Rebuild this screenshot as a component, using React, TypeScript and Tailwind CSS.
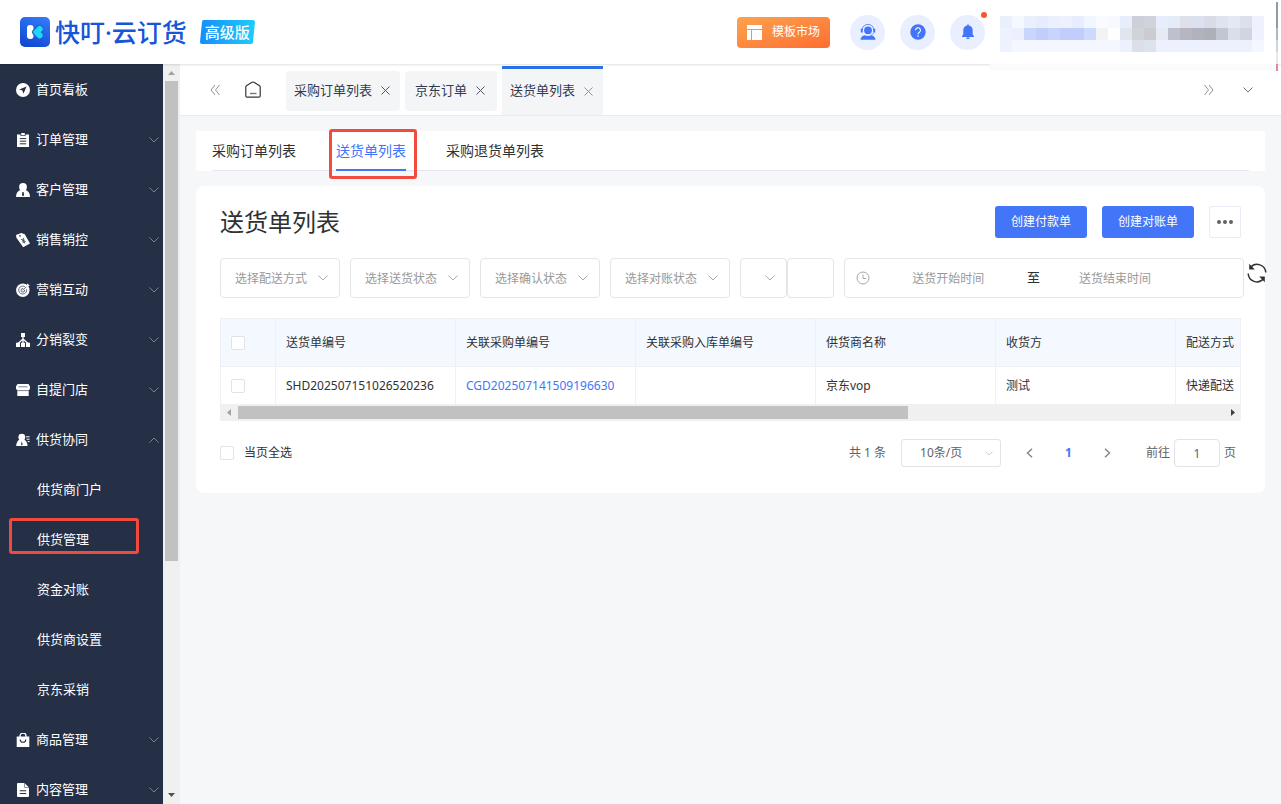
import { useState } from "react";
import type { ReactNode } from "react";

interface MenuItem {
  label: string;
  icon: ReactNode;
  expandable?: boolean;
  children?: string[];
}

function MenuIcon({ children }: { children: ReactNode }) {
  return (
    <svg viewBox="0 0 14 14" className="size-[14px] shrink-0" fill="#fff" aria-hidden="true">
      {children}
    </svg>
  );
}

const ink = "#252f46";

const menu: MenuItem[] = [
  {
    label: "首页看板",
    icon: (
      <MenuIcon>
        <circle cx="7" cy="7" r="7" />
        <path d="M10.6 3.6 3.2 6.6l3.2 1 1 3.2z" fill={ink} />
      </MenuIcon>
    ),
  },
  {
    label: "订单管理",
    expandable: true,
    icon: (
      <MenuIcon>
        <path d="M1 1.5h3.5V3h5V1.5H13V14H1z" />
        <path d="M5.2 0h3.6v2.3H5.2z" />
        <path d="M3.8 5.6h6.4M3.8 8.2h6.4M3.8 10.8h6.4" stroke={ink} strokeWidth="1" />
      </MenuIcon>
    ),
  },
  {
    label: "客户管理",
    expandable: true,
    icon: (
      <MenuIcon>
        <circle cx="7" cy="3.9" r="3.9" />
        <path d="M4.5 6.8h5C12.500 8 14 10.500 14 14H0C0 10.500 1.500 8 4.500 6.800z" />
        <path d="M6.400 9h1.200l.5 3.200L7 13.300l-1.100-1.100z" fill={ink} />
      </MenuIcon>
    ),
  },
  {
    label: "销售销控",
    expandable: true,
    icon: (
      <MenuIcon>
        <path d="M0 2 5.200 0l3.600 1.200L14 10.600 7.200 14.200.4 4.800z" />
        <circle cx="4" cy="2.900" r=".8" fill={ink} />
        <path d="m4.900 6.200 2.300 1 .5-2.300M7.200 7.200l1.600 3.200M5.900 8.400l3-1.400M6.700 9.800l3-1.400" stroke={ink} strokeWidth=".8" fill="none" />
      </MenuIcon>
    ),
  },
  {
    label: "营销互动",
    expandable: true,
    icon: (
      <MenuIcon>
        <circle cx="6.800" cy="7.200" r="6.700" />
        <path d="M9 3.800A4 4 0 1 0 10.600 6.200" fill="none" stroke={ink} strokeWidth=".7" />
        <path d="M7.300 5.600a1.800 1.800 0 1 0 1.300 1.400M6.800 7.300 13 1.300" fill="none" stroke={ink} strokeWidth=".7" />
        <path d="m10 2.200 2-2 .4 1.500 1.500.4-2 2-1.500-.2z" />
      </MenuIcon>
    ),
  },
  {
    label: "分销裂变",
    expandable: true,
    icon: (
      <MenuIcon>
        <path d="M5 0h4v4H5zM0 9.800h4V14H0zM5 9.800h4V14H5zM10 9.800h4V14h-4z" />
        <path d="M7 3.500V10M7 6 2 10.500M7 6l5 4.500" stroke="#fff" strokeWidth="1.300" />
      </MenuIcon>
    ),
  },
  {
    label: "自提门店",
    expandable: true,
    icon: (
      <MenuIcon>
        <path d="M1.500 1h11L14 3.500v2A1.800 1.800 0 0 1 12.700 7v6H1.300V7A1.800 1.800 0 0 1 0 5.500v-2z" />
        <path d="M2.500 3.800h9M1.300 7.600h11.400" stroke={ink} strokeWidth=".6" />
      </MenuIcon>
    ),
  },
  {
    label: "供货协同",
    expandable: true,
    icon: (
      <MenuIcon>
        <circle cx="5.800" cy="4.200" r="3.400" />
        <path d="M3.600 6.400H8c2.300 1.200 3.600 3.600 3.600 6.600H.2c0-3 1.200-5.400 3.400-6.600z" />
        <path d="m5.800 8.300.8 3.200-.8 1-.8-1z" fill={ink} />
        <path d="M10 3.800h3.600M10.500 6.200h3.100M11.600 8.600h2" stroke="#fff" strokeWidth="1" />
      </MenuIcon>
    ),
    children: ["供货商门户", "供货管理", "资金对账", "供货商设置", "京东采销"],
  },
  {
    label: "商品管理",
    expandable: true,
    icon: (
      <MenuIcon>
        <path d="M.7 3.500h12.600V14H.7z" />
        <path d="M4 4.500V3a3 3 0 0 1 6 0v1.500" fill="none" stroke="#fff" strokeWidth="1.300" />
        <path d="M4.200 6.500a2.800 2.800 0 0 0 5.600 0" fill="none" stroke={ink} strokeWidth="1.100" />
      </MenuIcon>
    ),
  },
  {
    label: "内容管理",
    expandable: true,
    icon: (
      <MenuIcon>
        <path d="M1 1a1 1 0 0 1 1-1h6.500L13 4.500V13a1 1 0 0 1-1 1H2a1 1 0 0 1-1-1z" />
        <path d="M8.500 0v4.500H13" fill="none" stroke={ink} strokeWidth=".5" />
        <path d="M3.800 7.700h6.400M3.800 10.500h6.400" stroke={ink} strokeWidth="1.100" />
      </MenuIcon>
    ),
  },
];

const pageTabs = ["采购订单列表", "京东订单", "送货单列表"];
const listTabs = ["采购订单列表", "送货单列表", "采购退货单列表"];
const filters = ["选择配送方式", "选择送货状态", "选择确认状态", "选择对账状态"];
const columns = ["送货单编号", "关联采购单编号", "关联采购入库单编号", "供货商名称", "收货方", "配送方式"];

const orders = [
  {
    id: "SHD202507151026520236",
    purchaseId: "CGD202507141509196630",
    stockInId: "",
    supplier: "京东vop",
    receiver: "测试",
    delivery: "快递配送",
  },
];

// the account name is masked with a 22 x 3 mosaic
const mosaic = [
  "e8effd f4f8ff eaeffd e5ecfc eaf0fd ecf1fd e6edfd f2f6fe f9fbfe f6f9fe e7edfa cdd0d8 d0d2dc e7edfd e4ebf9 dee1eb dce1ef d9dce7 dfe3f0 e4e8f5 dce0ec eff2fe",
  "eef2fe eceffc c9d5fb c0cefb c9d4fc c1cdfb c1cdfb ccdafd f2f3f3 fefefe e1e5f0 d0d3d8 cccbd0 e6eaf5 bdc1ce b7b5c0 b0b3be adb0b8 c1c6d5 dadee8 d0d5e1 eff2fe",
  "ecf2fe f4f7ff f4f7ff f4f7ff f4f7ff f4f7ff f4f7ff f4f7ff f4f7ff f4f7ff ecf1fe dcdee8 dde3ee edf1fe edf1fe edf1fe edf1fe edf1fe edf1fe edf1fe edf1fe f4f7ff",
].map((row) => row.split(" "));

function Chevron({ className, up }: { className: string; up?: boolean }) {
  return (
    <svg viewBox="0 0 10 6" fill="none" stroke="currentColor" className={className} aria-hidden="true">
      <path d={up ? "M.5 5.500 5 1l4.500 4.500" : "M.5.5 5 5 9.500.5"} />
    </svg>
  );
}

function DoubleArrow({ right }: { right?: boolean }) {
  return (
    <svg viewBox="0 0 10 12" fill="none" stroke="#8f939b" className="h-3 w-[10px]" aria-hidden="true">
      <path d={right ? "M.5 1l4 5-4 5M5 1l4 5-4 5" : "M5 1 1 6l4 5M9.500 1l-4 5 4 5"} />
    </svg>
  );
}

function Logo() {
  return (
    <svg viewBox="0 0 30 30" className="size-[30px]" aria-hidden="true">
      <defs>
        <linearGradient id="logo-bg" x1="0.300" y1="1" x2="0.700" y2="0">
          <stop offset="0" stopColor="#1049d2" />
          <stop offset="1" stopColor="#3478f6" />
        </linearGradient>
      </defs>
      <rect width="30" height="30" rx="5" fill="url(#logo-bg)" />
      <rect x="7" y="8" width="6.500" height="14" rx="3" fill="#fff" />
      <path d="m19.500 12-3.300 3.200 3.300 3.200" stroke="#1d5bdf" strokeWidth="8" fill="none" strokeLinecap="round" strokeLinejoin="round" />
      <path d="m19.700 12-3.200 3.200 3.200 3.200" stroke="#1fd6f5" strokeWidth="6" fill="none" strokeLinecap="round" strokeLinejoin="round" />
    </svg>
  );
}

function Header() {
  return (
    <header className="relative z-20 flex h-16 shrink-0 items-center bg-white pl-5 pr-[17px] shadow-[0_1px_2px_rgba(0,0,0,0.12)]">
      <Logo />
      <div className="ml-[5px] flex items-center whitespace-nowrap text-[25px] leading-8 font-medium text-[#1755d9]">
        <span>快叮</span>
        <span>·</span>
        <span>云订货</span>
      </div>
      <div className="relative ml-[13px] flex h-6 w-[55px] items-center justify-center">
        <svg viewBox="0 0 55 24" className="absolute inset-0" aria-hidden="true">
          <defs>
            <linearGradient id="badge-bg">
              <stop offset="0" stopColor="#168dfb" />
              <stop offset="1" stopColor="#1fccfb" />
            </linearGradient>
          </defs>
          <path d="M4 0h49q2 0 2 2l-2 20q0 2-2 2H2q-2 0-2-2L2 2q0-2 2-2z" fill="url(#badge-bg)" />
        </svg>
        <span className="relative text-[15px] leading-6 font-medium text-white">高级版</span>
      </div>

      <div className="ml-auto flex items-center">
        <button
          type="button"
          className="flex h-[31px] w-[93px] items-center justify-between rounded bg-linear-to-br from-[#fda24e] to-[#fd6d31] px-[10px] text-xs text-white"
        >
          <svg viewBox="0 0 15 15" fill="#fff" className="size-[15px]" aria-hidden="true">
            <path d="M0 0h15v4H0zM0 5h4v10H0zM5 5h10v10H5z" />
          </svg>
          模板市场
        </button>
        <button
          type="button"
          aria-label="客服"
          className="ml-5 flex size-[35px] items-center justify-center rounded-full bg-[#e9effe]"
        >
          <svg viewBox="0 0 16 16" className="size-4" fill="#4375f8" aria-hidden="true">
            <circle cx="8" cy="6.300" r="3.900" />
            <path d="M2.100 6A5.900 5.600 0 0 1 13.900 6" fill="none" stroke="#4375f8" strokeWidth=".8" />
            <path d="M.8 4.800h2v3.700h-2zM13.200 4.800h2v3.700h-2z" />
            <path d="M14 8.500c-.6 1.600-1.600 2.200-3 2.400" fill="none" stroke="#4375f8" strokeWidth=".6" />
            <path d="M4.800 11.300c2 .8 4.400.8 6.400 0 2.500.5 4 1.900 4.300 4.400H.5c.3-2.500 1.800-3.900 4.300-4.400z" />
          </svg>
        </button>
        <button
          type="button"
          aria-label="帮助"
          className="ml-[15px] flex size-[35px] items-center justify-center rounded-full bg-[#e9effe]"
        >
          <svg viewBox="0 0 16 16" className="size-4" aria-hidden="true">
            <circle cx="8" cy="8" r="7.700" fill="#4375f8" />
            <path d="M5.500 6.300a2.500 2.500 0 1 1 3.700 2.200C8.300 9 8 9.300 8 10.200" fill="none" stroke="#fff" strokeWidth="1.100" />
            <circle cx="8" cy="12" r=".8" fill="#fff" />
          </svg>
        </button>
        <button
          type="button"
          aria-label="消息"
          className="relative ml-[15px] flex size-[35px] items-center justify-center rounded-full bg-[#e9effe]"
        >
          <svg viewBox="0 0 16 16" className="size-4" fill="#4375f8" aria-hidden="true">
            <path d="M7.200 1a.8.8 0 0 1 1.600 0v.6c2.400.4 3.900 2.300 3.900 4.700v4l1.300 2v.7H2v-.7l1.300-2v-4C3.300 3.900 4.800 2 7.200 1.600zM6.200 13.600h3.600c-.2 1-.9 1.700-1.800 1.700s-1.600-.7-1.800-1.700z" />
          </svg>
          <span className="absolute -right-[2px] -top-[3px] size-[6px] rounded-full bg-[#fb5430]" />
        </button>
        <div className="ml-[15px] mt-1 grid grid-cols-[repeat(22,12px)]" aria-hidden="true">
          {mosaic.flat().map((color, i) => (
            <span key={i} className="h-3" style={{ backgroundColor: `#${color}` }} />
          ))}
        </div>
      </div>
      <div className="absolute right-[5px] top-16 h-[7px] w-[286px] bg-[#fbfbfc]" />
      <div className="absolute right-[3px] top-[2px] flex w-[2px] flex-col" aria-hidden="true">
        <span className="h-[26px] bg-[#8f9ba8]" />
        <span className="h-3 bg-[#adb8c8]" />
        <span className="h-3 bg-[#d0d3db]" />
        <span className="h-3 bg-[#e8e8eb]" />
        <span className="h-[7px] bg-[#de8a9c]" />
      </div>
    </header>
  );
}

function Sidebar() {
  return (
    <aside className="flex w-[180px] shrink-0 bg-[#f5f7f9]">
      <nav className="w-[163px] overflow-hidden bg-[#252f46] pt-px text-[13px] text-white">
        <ul>
          {menu.map((item) => (
            <li key={item.label}>
              <a href="#" className="flex h-[50px] items-center gap-[6px] pl-4 pr-1">
                {item.icon}
                <span>{item.label}</span>
                {item.expandable && (
                  <Chevron up={!!item.children} className="ml-auto h-[6px] w-[10px] text-[#7d828c]" />
                )}
              </a>
              {item.children && (
                <ul>
                  {item.children.map((child) => (
                    <li key={child} className="relative">
                      <a href="#" className="flex h-[50px] items-center pl-[37px]">
                        {child}
                      </a>
                      {child === "供货管理" && (
                        <span className="pointer-events-none absolute left-[9px] top-[3px] h-9 w-[130px] rounded-[3px] border-3 border-[#f04b3e]" />
                      )}
                    </li>
                  ))}
                </ul>
              )}
            </li>
          ))}
        </ul>
      </nav>
      <div className="flex w-[17px] flex-col bg-[#f0f0f0] px-[2px]" aria-hidden="true">
        <svg viewBox="0 0 13 17" className="h-[17px] w-[13px] shrink-0" fill="#a3a3a3">
          <path d="M3 11h7L6.500 7z" />
        </svg>
        <div className="flex-1">
          <div className="h-[68%] bg-[#c1c1c1]" />
        </div>
        <svg viewBox="0 0 13 17" className="h-[17px] w-[13px] shrink-0" fill="#505050">
          <path d="M3 6h7L6.500 10z" />
        </svg>
      </div>
    </aside>
  );
}

function PageTabs() {
  const [active, setActive] = useState("送货单列表");

  return (
    <div className="flex h-[52px] shrink-0 items-center border-b border-[#e8eaed] bg-white pl-[30px] pr-7">
      <button type="button" aria-label="向左滚动">
        <DoubleArrow />
      </button>
      <a href="#" aria-label="首页" className="ml-[25px]">
        <svg viewBox="0 0 16 17" fill="none" className="h-[17px] w-4" aria-hidden="true">
          <path d="M.8 5.800Q.8 5.200 1.400 4.800L7 1.300Q8 .7 9 1.300l5.600 3.500q.6.400.6 1V15q0 1.200-1.200 1.200H2Q.8 16.200.8 15z" stroke="#303640" strokeWidth="1.200" />
          <path d="M5 12.500h6.500" stroke="#777" strokeWidth="1.400" />
        </svg>
      </a>
      <div className="ml-[25px] flex h-full items-center gap-[5px] pt-[2px] text-[13px] text-[#303a50]">
        {pageTabs.map((tab) => (
          <div
            key={tab}
            className={
              tab === active
                ? "flex h-full items-center justify-center border-t-3 border-[#2b72e8] bg-[#f4f5f7] pb-[2px] pl-2 pr-[10px]"
                : "flex h-10 min-w-[92px] items-center justify-center rounded bg-[#f4f5f7] pl-2 pr-[10px]"
            }
          >
            <button type="button" onClick={() => setActive(tab)}>
              {tab}
            </button>
            <button type="button" aria-label={`关闭${tab}`} className="ml-[9px]">
              <svg
                viewBox="0 0 9 9"
                fill="none"
                stroke={tab === active ? "#6e94f3" : "#50555f"}
                className="size-[9px]"
                aria-hidden="true"
              >
                <path d="m.5.5 8 8M8.500.5l-8 8" />
              </svg>
            </button>
          </div>
        ))}
      </div>
      <button type="button" aria-label="向右滚动" className="ml-auto">
        <DoubleArrow right />
      </button>
      <button type="button" aria-label="更多标签" className="ml-[29px]">
        <Chevron className="h-[6px] w-[10px] text-[#70757d]" />
      </button>
    </div>
  );
}

function ListTabs() {
  return (
    <nav className="bg-white px-4">
      <ul className="flex h-10 gap-10 border-b border-[#e4e7ed] text-sm text-[#303133]">
        {listTabs.map((tab) =>
          tab === "送货单列表" ? (
            <li key={tab} className="relative">
              <a href="#" className="flex h-10 items-center border-b-2 border-[#4375f8] pt-[2px] text-[#4375f8]">
                {tab}
              </a>
              <span className="pointer-events-none absolute -left-[7px] -right-[11px] -top-[2px] h-[50px] rounded-[3px] border-3 border-[#f04b3e]" />
            </li>
          ) : (
            <li key={tab}>
              <a href="#" className="flex h-10 items-center">
                {tab}
              </a>
            </li>
          ),
        )}
      </ul>
    </nav>
  );
}

function FilterSelect({ label }: { label: string }) {
  return (
    <div className="relative w-[120px] shrink-0">
      <select
        aria-label={label}
        className="h-10 w-full appearance-none rounded border border-[#e4e5e8] bg-white pl-[14px] pt-px text-xs text-[#999]"
      >
        <option>{label}</option>
      </select>
      <Chevron className="pointer-events-none absolute right-3 top-[17px] h-[6px] w-[10px] text-[#a5a8ae]" />
    </div>
  );
}

function Filters() {
  return (
    <div className="-mr-[26px] mt-5 flex gap-[10px]">
      {filters.map((label) => (
        <FilterSelect key={label} label={label} />
      ))}
      <div className="flex shrink-0">
        <div className="relative w-[47px]">
          <select
            aria-label="搜索类型"
            className="h-10 w-full appearance-none rounded border border-[#e4e5e8] bg-white text-xs"
          />
          <Chevron className="pointer-events-none absolute right-3 top-[17px] h-[6px] w-[10px] text-[#a5a8ae]" />
        </div>
        <input
          type="text"
          aria-label="搜索内容"
          className="h-10 w-[47px] rounded border border-[#e4e5e8] px-2 text-xs"
        />
      </div>
      <div className="flex min-w-0 flex-1 gap-[3px]">
        <div className="flex h-10 min-w-0 flex-1 items-center rounded border border-[#e4e5e8] px-[11px] text-xs">
          <svg viewBox="0 0 14 14" fill="none" stroke="#a5a8ae" className="mr-[5px] size-[14px] shrink-0" aria-hidden="true">
            <circle cx="7" cy="7" r="6" />
            <path d="M7 3.500v4h3" />
          </svg>
          <input
            type="text"
            aria-label="送货开始时间"
            placeholder="送货开始时间"
            className="w-[39%] min-w-0 pt-px text-center placeholder:text-[#999]"
          />
          <span className="w-5 pl-1 text-center text-[13px] text-[#303133]">至</span>
          <input
            type="text"
            aria-label="送货结束时间"
            placeholder="送货结束时间"
            className="w-[39%] min-w-0 pt-px text-center placeholder:text-[#999]"
          />
        </div>
        <button type="button" aria-label="刷新" className="mt-[5px] self-start">
          <svg viewBox="0 0 20 20" className="size-5" aria-hidden="true">
            <path d="M3.500 4.500A8.700 8.700 0 0 1 18.800 9.500M16.500 15.800A8.700 8.700 0 0 1 1.200 10.500" fill="none" stroke="#2f3237" strokeWidth="1.500" />
            <path d="M2.200.8v5.600h5.600zM17.800 19.200v-5.600h-5.600z" fill="#2f3237" />
          </svg>
        </button>
      </div>
    </div>
  );
}

function Checkbox({ id, label }: { id: string; label?: string }) {
  return (
    <input
      id={id}
      type="checkbox"
      aria-label={label}
      className="block size-[14px] shrink-0 appearance-none rounded-[2px] border border-[#e2e3e6] bg-white checked:bg-[#4375f8]"
    />
  );
}

function OrderTable() {
  return (
    <div className="mt-5 overflow-hidden border-l border-t border-[#eff0f3]">
      <table className="w-full table-fixed border-separate border-spacing-0 text-left text-xs text-[#303133]">
        <colgroup>
          <col className="w-[55px]" />
          <col className="w-[180px]" />
          <col className="w-[180px]" />
          <col className="w-[180px]" />
          <col className="w-[180px]" />
          <col className="w-[180px]" />
          <col />
        </colgroup>
        <thead className="bg-[#f4f8ff]">
          <tr>
            <th className="h-12 border-b border-r border-[#eff0f3] px-[10px]">
              <Checkbox id="check-all" label="全选" />
            </th>
            {columns.map((column) => (
              <th
                key={column}
                className="whitespace-nowrap border-b border-r border-[#eff0f3] pl-[10px] font-normal"
              >
                {column}
              </th>
            ))}
          </tr>
        </thead>
        <tbody>
          {orders.map((order) => (
            <tr key={order.id}>
              <td className="h-[37px] border-r border-[#eff0f3] px-[10px]">
                <Checkbox id={order.id} label={order.id} />
              </td>
              <td className="border-r border-[#eff0f3] pl-[10px]">{order.id}</td>
              <td className="border-r border-[#eff0f3] pl-[10px]">
                <a href="#" className="text-[#4375f8]">
                  {order.purchaseId}
                </a>
              </td>
              <td className="border-r border-[#eff0f3] pl-[10px]">{order.stockInId}</td>
              <td className="border-r border-[#eff0f3] pl-[10px]">{order.supplier}</td>
              <td className="border-r border-[#eff0f3] pl-[10px]">{order.receiver}</td>
              <td className="whitespace-nowrap border-r border-[#eff0f3] pl-[10px]">{order.delivery}</td>
            </tr>
          ))}
        </tbody>
      </table>
      <div className="flex h-[17px] items-center bg-[#f0f0f0]" aria-hidden="true">
        <svg viewBox="0 0 17 13" className="h-[13px] w-[17px] shrink-0" fill="#a3a3a3">
          <path d="M10 3v7L6 6.500z" />
        </svg>
        <div className="flex-1">
          <div className="h-[13px] w-[68%] bg-[#c1c1c1]" />
        </div>
        <svg viewBox="0 0 17 13" className="h-[13px] w-[17px] shrink-0" fill="#404040">
          <path d="M7 3v7l4-3.500z" />
        </svg>
      </div>
    </div>
  );
}

function Pagination() {
  return (
    <div className="mt-[18px] flex items-center pr-[5px] text-xs text-[#606266]">
      <Checkbox id="check-page" />
      <label htmlFor="check-page" className="ml-[10px] text-[#303133]">
        当页全选
      </label>
      <span className="ml-auto">共 1 条</span>
      <div className="relative ml-[15px]">
        <select
          aria-label="每页条数"
          className="block h-7 w-[100px] appearance-none rounded-[3px] border border-[#e2e3e6] bg-white pl-[18px] text-xs text-[#606266]"
        >
          <option>10条/页</option>
        </select>
        <Chevron className="pointer-events-none absolute right-2 top-3 h-[5px] w-2 text-[#bfc2c8]" />
      </div>
      <button type="button" aria-label="上一页" className="ml-[25px] text-[#85888e]">
        <svg viewBox="0 0 7 10" fill="none" stroke="currentColor" strokeWidth="1.500" className="h-[10px] w-[7px]">
          <path d="M6 .7 1.500 5 6 9.300" />
        </svg>
      </button>
      <a href="#" className="ml-8 font-bold text-[#4375f8]">
        1
      </a>
      <button type="button" aria-label="下一页" className="ml-8 text-[#85888e]">
        <svg viewBox="0 0 7 10" fill="none" stroke="currentColor" strokeWidth="1.500" className="h-[10px] w-[7px]">
          <path d="M1 .7 5.500 5 1 9.300" />
        </svg>
      </button>
      <label htmlFor="page-no" className="ml-[35px]">
        前往
      </label>
      <input
        id="page-no"
        type="text"
        defaultValue="1"
        className="mx-1 h-7 w-[46px] rounded border border-[#e2e3e6] text-center"
      />
      <span>页</span>
    </div>
  );
}

export default function App() {
  return (
    <div className="flex h-screen flex-col overflow-hidden bg-[#f5f7f9] font-['Noto_Sans','Noto_Sans_CJK_SC',sans-serif]">
      <Header />
      <div className="flex min-h-0 flex-1">
        <Sidebar />
        <main className="flex min-w-0 flex-1 flex-col">
          <PageTabs />
          <div className="flex flex-col gap-[15px] px-4 py-[15px]">
            <ListTabs />
            <section className="rounded-lg bg-white px-6 pb-[26px] pt-5">
              <div className="flex items-center gap-[15px]">
                <h1 className="mr-auto text-2xl leading-8 text-[#303133]">送货单列表</h1>
                <button type="button" className="h-8 w-[92px] rounded-[3px] bg-[#4375f8] text-xs text-white">
                  创建付款单
                </button>
                <button type="button" className="h-8 w-[92px] rounded-[3px] bg-[#4375f8] text-xs text-white">
                  创建对账单
                </button>
                <button
                  type="button"
                  aria-label="更多"
                  className="flex size-8 items-center justify-center rounded-[2px] border border-[#e9ecf5]"
                >
                  <svg viewBox="0 0 16 4" fill="#606266" className="h-1 w-4" aria-hidden="true">
                    <circle cx="2" cy="2" r="2" />
                    <circle cx="8" cy="2" r="2" />
                    <circle cx="14" cy="2" r="2" />
                  </svg>
                </button>
              </div>
              <Filters />
              <OrderTable />
              <Pagination />
            </section>
          </div>
        </main>
      </div>
    </div>
  );
}
